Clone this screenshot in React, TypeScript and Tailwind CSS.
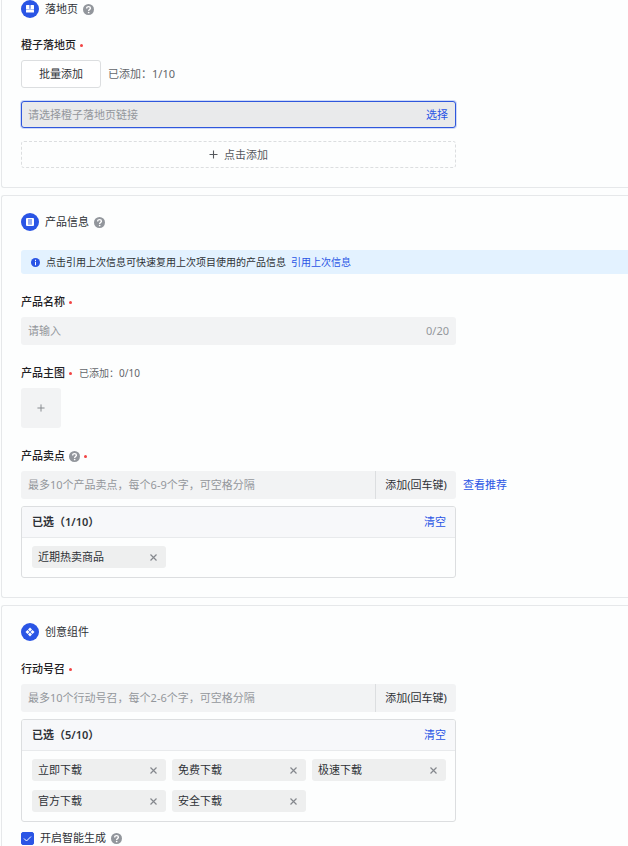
import { useState, type ReactNode } from "react";

function HelpIcon({ label }: { label: string }) {
  return (
    <button type="button" aria-label={label} className="size-[11px] shrink-0">
      <svg viewBox="0 0 22 22" className="block size-full">
        <circle cx="11" cy="11" r="11" fill="#92969c" />
        <path
          d="M7.400 8.800c0-2.200 1.500-3.600 3.700-3.600s3.700 1.300 3.700 3.300c0 2.500-3.500 2.600-3.500 5.300"
          fill="none"
          stroke="#fff"
          strokeWidth="2.800"
        />
        <circle cx="11.300" cy="17" r="1.700" fill="#fff" />
      </svg>
    </button>
  );
}

function LandingIcon() {
  return (
    <svg viewBox="0 0 36 36" className="size-[18px] shrink-0" aria-hidden="true">
      <circle cx="18" cy="18" r="18" fill="#2a55e5" />
      <rect x="10" y="10" width="7" height="8" rx="1" fill="#fff" />
      <rect x="19" y="10" width="7" height="8" rx="1" fill="#fff" />
      <rect x="10" y="19.500" width="16" height="5.500" rx="1" fill="#fff" />
      <rect x="10" y="17" width="16" height="3.500" fill="#fff" opacity=".5" />
    </svg>
  );
}

function ProductIcon() {
  return (
    <svg viewBox="0 0 36 36" className="size-[18px] shrink-0" aria-hidden="true">
      <circle cx="18" cy="18" r="18" fill="#2a55e5" />
      <rect x="10" y="10" width="16" height="16" rx="2" fill="#fff" />
      <rect x="14" y="12" width="8" height="11" fill="#a9baf6" />
      <path d="M14 14h8M14 18h8M14 22h8" stroke="#8299f0" strokeWidth="1.600" />
    </svg>
  );
}

function ComponentIcon() {
  return (
    <svg viewBox="0 0 36 36" className="size-[18px] shrink-0" aria-hidden="true">
      <circle cx="18" cy="18" r="18" fill="#2a55e5" />
      <g fill="#fff">
        <path d="M18 9l4 4-4 4-4-4zM18 19l4 4-4 4-4-4zM13 14l4 4-4 4-4-4zM23 14l4 4-4 4-4-4z" />
      </g>
    </svg>
  );
}

function PlusIcon({ className }: { className: string }) {
  return (
    <svg viewBox="0 0 9 9" className={className} aria-hidden="true">
      <path d="M.5 4.500h8M4.500.5v8" stroke="currentColor" strokeWidth="1.100" fill="none" />
    </svg>
  );
}

function Dot() {
  return <span aria-hidden="true" className="size-[3px] shrink-0 rounded-full bg-[#f24444]" />;
}

function SectionHeader({ icon, title, help }: { icon: ReactNode; title: string; help?: boolean }) {
  return (
    <header className="flex h-[18px] items-center">
      {icon}
      <h2 className="ml-[6px]">{title}</h2>
      {help && (
        <span className="ml-[5px] flex">
          <HelpIcon label={`${title}说明`} />
        </span>
      )}
    </header>
  );
}

function TagPicker({
  id,
  placeholder,
  initial,
  link,
}: {
  id: string;
  placeholder: string;
  initial: string[];
  link?: string;
}) {
  const [tags, setTags] = useState(initial);
  const [text, setText] = useState("");
  const add = () => {
    const next = text.split(/\s+/).filter(Boolean);
    setTags([...tags, ...next].slice(0, 10));
    setText("");
  };
  return (
    <>
      <div className="mt-[6px] flex items-center">
        <div className="flex h-[28px] w-full max-w-[435px] overflow-hidden rounded-[3px] bg-[#f2f3f4]">
          <input
            id={id}
            value={text}
            onChange={(e) => setText(e.target.value)}
            onKeyDown={(e) => e.key === "Enter" && add()}
            placeholder={placeholder}
            className="min-w-0 flex-1 px-[7px] outline-none placeholder:text-[#94979c]"
          />
          <button type="button" onClick={add} className="w-[81px] shrink-0 border-l border-[#dcdee0]">
            添加(回车键)
          </button>
        </div>
        {link && (
          <a href="#recommend" className="ml-[7px] shrink-0 text-[#2a55e5]">
            {link}
          </a>
        )}
      </div>
      <div className="mt-[7px] max-w-[435px] overflow-hidden rounded-[3px] border border-[#dcdee0]">
        <div className="flex h-[31px] items-center justify-between border-b border-[#e8eaec] bg-[#f7f8fa] pr-[9px] pl-[10px]">
          <span className="font-semibold">已选（{tags.length}/10）</span>
          <button type="button" onClick={() => setTags([])} className="text-[#2a55e5]">
            清空
          </button>
        </div>
        <ul className="grid grid-cols-3 gap-x-[6px] gap-y-[9px] pt-[8px] pr-[9px] pb-[9px] pl-[10px]">
          {tags.map((tag) => (
            <li key={tag} className="flex h-[22px] items-center justify-between rounded-[3px] bg-[#eeefef] px-[6px]">
              <span>{tag}</span>
              <button
                type="button"
                aria-label={`删除${tag}`}
                onClick={() => setTags(tags.filter((t) => t !== tag))}
                className="flex size-[13px] items-center justify-center text-[#85888d]"
              >
                <svg viewBox="0 0 7 7" className="size-[7px]" aria-hidden="true">
                  <path d="M.5.5l6 6M6.500.5l-6 6" stroke="currentColor" strokeWidth="1.200" fill="none" />
                </svg>
              </button>
            </li>
          ))}
        </ul>
      </div>
    </>
  );
}

const labelRow = "flex h-[18px] items-center gap-[4px]";
const labelText = "font-medium text-[#1f2124]";

export default function App() {
  const [name, setName] = useState("");
  return (
    <main className="flex min-h-screen flex-col gap-[7px] overflow-hidden bg-[#fdfefe] pl-px font-['Noto_Sans','Noto_Sans_CJK_SC',sans-serif] text-[11px] leading-[16px] text-[#2f3237]">
      <section className="rounded-bl-[3px] border-b border-l border-[#e6e8ea] pb-[19px] pl-[19px]">
        <SectionHeader icon={<LandingIcon />} title="落地页" help />
        <div className={`${labelRow} mt-[18px]`}>
          <label htmlFor="landing" className={labelText}>
            橙子落地页
          </label>
          <Dot />
        </div>
        <div className="mt-[6px] flex items-center gap-[7px]">
          <button type="button" className="h-[28px] w-[80px] rounded-[3px] border border-[#dcdee0] bg-white">
            批量添加
          </button>
          <span className="text-[#63666b]">已添加：1/10</span>
        </div>
        <div className="mt-[13px] flex h-[27px] max-w-[435px] items-center rounded-[3px] border border-[#2f57dc] bg-[#e9eaeb] pr-[7px] ring-1 ring-[#cfdaf8]">
          <input
            id="landing"
            placeholder="请选择橙子落地页链接"
            className="min-w-0 flex-1 px-[6px] outline-none placeholder:text-[#94979c]"
          />
          <button type="button" className="text-[#2a55e5]">
            选择
          </button>
        </div>
        <button
          type="button"
          className="mt-[13px] flex h-[27px] w-full max-w-[435px] items-center justify-center gap-[6px] rounded-[3px] border border-dashed border-[#dcdee0] text-[#55585d]"
        >
          <PlusIcon className="size-[9px]" />
          点击添加
        </button>
      </section>

      <section className="rounded-l-[3px] border-y border-l border-[#e6e8ea] pt-[17px] pb-[19px] pl-[19px]">
        <SectionHeader icon={<ProductIcon />} title="产品信息" help />
        <div className="mt-[19px] flex h-[24px] items-center rounded-l-[3px] bg-[#e3f2ff] pl-[10px] text-[10px]">
          <svg viewBox="0 0 18 18" className="size-[9px] shrink-0" aria-hidden="true">
            <circle cx="9" cy="9" r="9" fill="#2a55e5" />
            <path d="M9 3.500v2.500M9 7.500v7" stroke="#fff" strokeWidth="2" />
          </svg>
          <span className="ml-[6px]">点击引用上次信息可快速复用上次项目使用的产品信息</span>
          <a href="#last" className="ml-[5px] text-[#2a55e5]">
            引用上次信息
          </a>
        </div>
        <div className={`${labelRow} mt-[19px]`}>
          <label htmlFor="name" className={labelText}>
            产品名称
          </label>
          <Dot />
        </div>
        <div className="mt-[6px] flex h-[28px] max-w-[435px] items-center rounded-[3px] bg-[#f2f3f4] pr-[7px] text-[#94979c]">
          <input
            id="name"
            maxLength={20}
            value={name}
            onChange={(e) => setName(e.target.value)}
            placeholder="请输入"
            className="min-w-0 flex-1 px-[7px] text-[#2f3237] outline-none placeholder:text-[#94979c]"
          />
          <span>{name.length}/20</span>
        </div>
        <div className={`${labelRow} mt-[19px]`}>
          <span className={labelText}>产品主图</span>
          <Dot />
          <span className="ml-[3px] text-[10px] text-[#63666b]">已添加：0/10</span>
        </div>
        <button
          type="button"
          aria-label="添加产品主图"
          className="mt-[6px] flex size-[40px] items-center justify-center rounded-[3px] bg-[#f2f3f4] text-[#85888d]"
        >
          <PlusIcon className="size-[8px]" />
        </button>
        <div className={`${labelRow} mt-[19px]`}>
          <label htmlFor="points" className={labelText}>
            产品卖点
          </label>
          <HelpIcon label="产品卖点说明" />
          <Dot />
        </div>
        <TagPicker
          id="points"
          placeholder="最多10个产品卖点，每个6-9个字，可空格分隔"
          initial={["近期热卖商品"]}
          link="查看推荐"
        />
      </section>

      <section className="flex-1 rounded-tl-[3px] border-t border-l border-[#e6e8ea] pt-[17px] pl-[19px]">
        <SectionHeader icon={<ComponentIcon />} title="创意组件" />
        <div className={`${labelRow} mt-[19px]`}>
          <label htmlFor="action" className={labelText}>
            行动号召
          </label>
          <Dot />
        </div>
        <TagPicker
          id="action"
          placeholder="最多10个行动号召，每个2-6个字，可空格分隔"
          initial={["立即下载", "免费下载", "极速下载", "官方下载", "安全下载"]}
        />
        <div className="mt-[8px] flex h-[16px] items-center gap-[5px]">
          <label className="flex items-center gap-[6px]">
            <span className="grid size-[13px]">
              <input
                type="checkbox"
                defaultChecked
                className="peer col-start-1 row-start-1 size-[13px] appearance-none rounded-[2px] border border-[#c9cccf] checked:border-[#2a55e5] checked:bg-[#2a55e5]"
              />
              <svg
                viewBox="0 0 13 13"
                className="pointer-events-none col-start-1 row-start-1 size-[13px] opacity-0 peer-checked:opacity-100"
                aria-hidden="true"
              >
                <path d="M3 6.500l2.500 2.500L10 4.500" fill="none" stroke="#fff" />
              </svg>
            </span>
            开启智能生成
          </label>
          <HelpIcon label="智能生成说明" />
        </div>
      </section>
    </main>
  );
}
